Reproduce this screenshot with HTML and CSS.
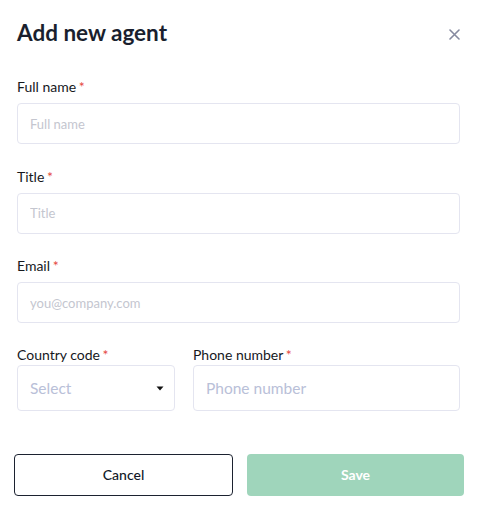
FILE: index.html
```html
<!DOCTYPE html>
<html lang="en">
<head>
<meta charset="utf-8">
<link rel="stylesheet" href="styles.css">
</head>
<body>
<div class="modal">
  <div class="header">
    <h1 class="title">Add new agent</h1>
    <button class="close" aria-label="Close">
      <svg width="11" height="11" viewBox="0 0 11 11"><path d="M1 1L10 10M10 1L1 10" stroke="#868aa0" stroke-width="1.6" stroke-linecap="round"/></svg>
    </button>
  </div>
  <div class="field">
    <label class="label">Full name <span class="req">*</span></label>
    <input class="input" placeholder="Full name">
  </div>
  <div class="field">
    <label class="label">Title <span class="req">*</span></label>
    <input class="input" placeholder="Title">
  </div>
  <div class="field">
    <label class="label">Email <span class="req">*</span></label>
    <input class="input" placeholder="you@company.com">
  </div>
  <div class="row">
    <div class="field small code">
      <label class="label">Country code <span class="req">*</span></label>
      <div class="select">
        <span class="select-ph">Select</span>
        <svg class="caret" width="8" height="5" viewBox="0 0 8 5"><path d="M0.5 0.5H7.5L4 4.5Z" fill="#111"/></svg>
      </div>
    </div>
    <div class="field small phone">
      <label class="label">Phone number <span class="req">*</span></label>
      <input class="input big" placeholder="Phone number">
    </div>
  </div>
  <div class="actions">
    <button class="btn cancel">Cancel</button>
    <button class="btn save">Save</button>
  </div>
</div>
</body>
</html>
```
FILE: styles.css
```css
* { box-sizing: border-box; }
body {
  margin: 0;
  background: #fff;
  font-family: Lato, "Open Sans", sans-serif;
  color: #111827;
}
.modal {
  padding: 19px 18px 0 17px;
}
.header {
  display: flex;
  justify-content: space-between;
  align-items: flex-start;
  height: 28px;
  margin-bottom: 32px;
}
.title {
  margin: 0;
  font-size: 22.5px;
  line-height: 28px;
  font-weight: 700;
  color: #1a1f2e;
}
.close {
  border: 0;
  background: none;
  padding: 0;
  margin-top: 10px;
  width: 11px;
  height: 11px;
  display: flex;
}
.field {
  display: flex;
  flex-direction: column;
  margin-bottom: 24.5px;
}
.label {
  font-size: 14px;
  line-height: 16px;
  color: #16181d;
  margin-bottom: 8px;
}
.req { color: #e5483f; margin-left: -1px; }
.input {
  height: 41px;
  border: 1px solid #e4e5f0;
  border-radius: 4px;
  padding: 0 12px;
  font-family: Lato, sans-serif;
  font-size: 13px;
  color: #111;
  outline: none;
}
.input::placeholder { color: #c4c6cf; }
.row {
  display: flex;
  gap: 18px;
  margin-top: -3px;
}
.field.small { margin-bottom: 0; }
.field.small .label { margin-bottom: 0; line-height: 20px; }
.code { width: 158px; }
.phone { flex: 1; }
.select {
  height: 46px;
  border: 1px solid #e4e5f0;
  border-radius: 4px;
  display: flex;
  align-items: center;
  justify-content: space-between;
  padding: 0 10px 0 12px;
}
.select-ph {
  font-size: 15.5px;
  color: #b9c0d8;
}
.caret { margin-top: 1px; }
.input.big {
  height: 46px;
  font-size: 15.5px;
}
.input.big::placeholder { color: #b9c0d8; }
.actions {
  display: flex;
  gap: 14px;
  margin: 43px -4px 0 -3px;
}
.btn {
  flex: 1;
  height: 42px;
  border-radius: 4px;
  font-family: Lato, sans-serif;
  font-size: 14px;
}
.cancel {
  background: #fff;
  border: 1px solid #1c2230;
  color: #111827;
  font-weight: 500;
}
.save {
  background: #9fd5bb;
  border: 0;
  color: #fff;
  font-weight: 700;
}
```
